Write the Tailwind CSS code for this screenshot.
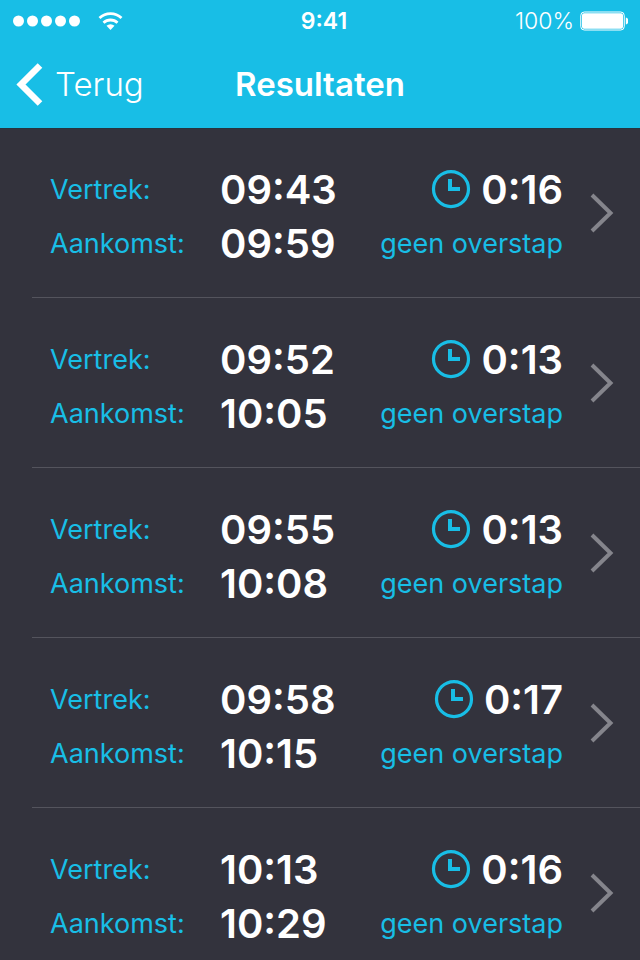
<!DOCTYPE html>
<html lang="nl">

<head>
    <meta charset="UTF-8">
    <meta name="viewport" content="width=device-width, initial-scale=1.0">
    <title>Resultaten</title>
    <script src="https://cdn.jsdelivr.net/npm/@tailwindcss/browser@4"></script>
</head>

<body class="flex h-screen flex-col bg-[#33333d] font-['Inter','Liberation_Sans',sans-serif] text-white">

    <!-- Shared icons -->
    <svg class="hidden">
        <symbol id="clock" viewBox="0 0 40 40">
            <circle cx="20" cy="19.1" r="17.5" fill="none" stroke="currentColor" stroke-width="3.2" />
            <path d="M19 9v10h10" fill="none" stroke="currentColor" stroke-width="4" />
        </symbol>
        <symbol id="chevron" viewBox="0 0 24 40">
            <path d="M2 2l18.5 18L2 38" fill="none" stroke="currentColor" stroke-width="4" />
        </symbol>
    </svg>

    <header class="shrink-0 bg-[#18bee6] shadow-[0_1px_0_#26343f]">
        <!-- Status bar -->
        <div class="grid h-[42px] grid-cols-3 items-center px-3 text-[23px]">
            <div class="flex items-center gap-4">
                <svg class="h-3 w-[70px]" viewBox="0 0 70 12" fill="currentColor">
                    <circle cx="6.5" cy="6" r="5.5" />
                    <circle cx="20.5" cy="6" r="5.5" />
                    <circle cx="34.5" cy="6" r="5.5" />
                    <circle cx="48.5" cy="6" r="5.5" />
                    <circle cx="62.5" cy="6" r="5.5" />
                </svg>
                <svg class="h-[18px] w-[25px]" viewBox="0 0 25 18" fill="none" stroke="currentColor" stroke-width="2.8">
                    <path d="M1.5 6a16 16 0 0 1 22 0" />
                    <path d="M5.5 10.8a10.2 10.2 0 0 1 14 0" />
                    <path d="M12.5 18l-4-4.2a6 6 0 0 1 8 0z" fill="currentColor" stroke="none" />
                </svg>
            </div>
            <time class="pl-2 text-center font-semibold">9:41</time>
            <div class="flex items-center justify-end gap-1.5">
                <span class="font-light">100%</span>
                <svg class="h-5 w-12" viewBox="0 0 48 20" fill="currentColor">
                    <rect x=".75" y="1" width="43.5" height="18" rx="3.5" fill="none" stroke="currentColor" />
                    <rect x="2" y="2.25" width="41" height="15.5" rx="2" />
                    <path d="M45.8 6.5c3.6.8 3.6 6.2 0 7z" />
                </svg>
            </div>
        </div>

        <!-- Navigation -->
        <nav class="grid h-[86px] grid-cols-3 items-center px-4 text-[33px]">
            <a href="#" class="flex items-center gap-3 font-light">
                <svg class="h-11 w-[27px]" viewBox="0 0 27 44" fill="none" stroke="currentColor" stroke-width="6.5">
                    <path d="M24 2.5L5 21.500 24 40.500" />
                </svg>
                Terug
            </a>
            <h1 class="text-center font-semibold">Resultaten</h1>
        </nav>
    </header>

    <!-- Travel options -->
    <main class="min-h-0 flex-1 overflow-y-auto [scrollbar-width:none]">
        <ul class="ml-8">
            <li class="border-b border-[#54545d]">
                <a href="#" class="flex items-center pr-[26px] pl-[18px]">
                    <dl class="grid flex-1 grid-cols-[170px_1fr] pt-[35px] pb-[26px] leading-[54px]">
                        <dt class="text-[27px] text-[#18bee6]">Vertrek:</dt>
                        <dd class="text-[40px] font-semibold">09:43</dd>
                        <dt class="text-[27px] text-[#18bee6]">Aankomst:</dt>
                        <dd class="text-[40px] font-semibold">09:59</dd>
                    </dl>
                    <div class="pt-[35px] pb-[26px] text-right leading-[54px]">
                        <p class="flex items-center justify-end gap-2.5 text-[40px] font-semibold">
                            <svg class="size-10 text-[#18bee6]"><use href="#clock" /></svg>
                            0:16
                        </p>
                        <p class="text-[27px] text-[#18bee6]">geen overstap</p>
                    </div>
                    <svg class="ml-[27px] h-10 w-6 text-[#85858c]"><use href="#chevron" /></svg>
                </a>
            </li>
            <li class="border-b border-[#54545d]">
                <a href="#" class="flex items-center pr-[26px] pl-[18px]">
                    <dl class="grid flex-1 grid-cols-[170px_1fr] pt-[35px] pb-[26px] leading-[54px]">
                        <dt class="text-[27px] text-[#18bee6]">Vertrek:</dt>
                        <dd class="text-[40px] font-semibold">09:52</dd>
                        <dt class="text-[27px] text-[#18bee6]">Aankomst:</dt>
                        <dd class="text-[40px] font-semibold">10:05</dd>
                    </dl>
                    <div class="pt-[35px] pb-[26px] text-right leading-[54px]">
                        <p class="flex items-center justify-end gap-2.5 text-[40px] font-semibold">
                            <svg class="size-10 text-[#18bee6]"><use href="#clock" /></svg>
                            0:13
                        </p>
                        <p class="text-[27px] text-[#18bee6]">geen overstap</p>
                    </div>
                    <svg class="ml-[27px] h-10 w-6 text-[#85858c]"><use href="#chevron" /></svg>
                </a>
            </li>
            <li class="border-b border-[#54545d]">
                <a href="#" class="flex items-center pr-[26px] pl-[18px]">
                    <dl class="grid flex-1 grid-cols-[170px_1fr] pt-[35px] pb-[26px] leading-[54px]">
                        <dt class="text-[27px] text-[#18bee6]">Vertrek:</dt>
                        <dd class="text-[40px] font-semibold">09:55</dd>
                        <dt class="text-[27px] text-[#18bee6]">Aankomst:</dt>
                        <dd class="text-[40px] font-semibold">10:08</dd>
                    </dl>
                    <div class="pt-[35px] pb-[26px] text-right leading-[54px]">
                        <p class="flex items-center justify-end gap-2.5 text-[40px] font-semibold">
                            <svg class="size-10 text-[#18bee6]"><use href="#clock" /></svg>
                            0:13
                        </p>
                        <p class="text-[27px] text-[#18bee6]">geen overstap</p>
                    </div>
                    <svg class="ml-[27px] h-10 w-6 text-[#85858c]"><use href="#chevron" /></svg>
                </a>
            </li>
            <li class="border-b border-[#54545d]">
                <a href="#" class="flex items-center pr-[26px] pl-[18px]">
                    <dl class="grid flex-1 grid-cols-[170px_1fr] pt-[35px] pb-[26px] leading-[54px]">
                        <dt class="text-[27px] text-[#18bee6]">Vertrek:</dt>
                        <dd class="text-[40px] font-semibold">09:58</dd>
                        <dt class="text-[27px] text-[#18bee6]">Aankomst:</dt>
                        <dd class="text-[40px] font-semibold">10:15</dd>
                    </dl>
                    <div class="pt-[35px] pb-[26px] text-right leading-[54px]">
                        <p class="flex items-center justify-end gap-2.5 text-[40px] font-semibold">
                            <svg class="size-10 text-[#18bee6]"><use href="#clock" /></svg>
                            0:17
                        </p>
                        <p class="text-[27px] text-[#18bee6]">geen overstap</p>
                    </div>
                    <svg class="ml-[27px] h-10 w-6 text-[#85858c]"><use href="#chevron" /></svg>
                </a>
            </li>
            <li class="border-b border-[#54545d]">
                <a href="#" class="flex items-center pr-[26px] pl-[18px]">
                    <dl class="grid flex-1 grid-cols-[170px_1fr] pt-[35px] pb-[26px] leading-[54px]">
                        <dt class="text-[27px] text-[#18bee6]">Vertrek:</dt>
                        <dd class="text-[40px] font-semibold">10:13</dd>
                        <dt class="text-[27px] text-[#18bee6]">Aankomst:</dt>
                        <dd class="text-[40px] font-semibold">10:29</dd>
                    </dl>
                    <div class="pt-[35px] pb-[26px] text-right leading-[54px]">
                        <p class="flex items-center justify-end gap-2.5 text-[40px] font-semibold">
                            <svg class="size-10 text-[#18bee6]"><use href="#clock" /></svg>
                            0:16
                        </p>
                        <p class="text-[27px] text-[#18bee6]">geen overstap</p>
                    </div>
                    <svg class="ml-[27px] h-10 w-6 text-[#85858c]"><use href="#chevron" /></svg>
                </a>
            </li>
        </ul>
    </main>
</body>

</html>
